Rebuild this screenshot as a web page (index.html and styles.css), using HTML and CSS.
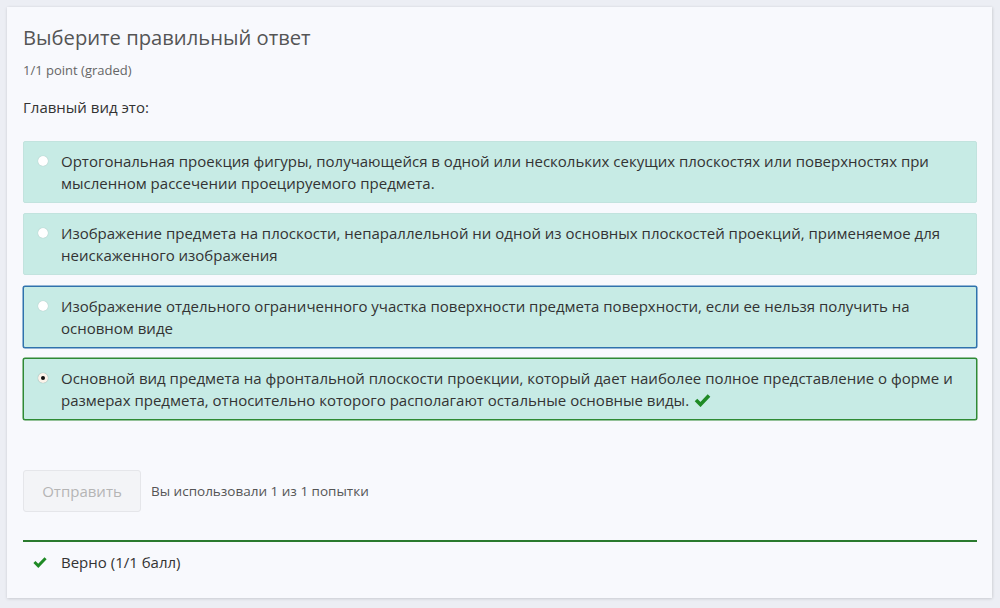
FILE: index.html
```html
<!DOCTYPE html>
<html lang="ru">
<head>
<meta charset="utf-8">
<link rel="stylesheet" href="styles.css">
</head>
<body>
<div class="card">
  <h2 class="title">Выберите правильный ответ</h2>
  <div class="points">1/1 point (graded)</div>
  <p class="question">Главный вид это:</p>
  <div class="options">
    <label class="option">
      <span class="radio"></span>
      <span class="text">Ортогональная проекция фигуры, получающейся в одной или нескольких секущих плоскостях или поверхностях при мысленном рассечении проецируемого предмета.</span>
    </label>
    <label class="option">
      <span class="radio"></span>
      <span class="text">Изображение предмета на плоскости, непараллельной ни одной из основных плоскостей проекций, применяемое для неискаженного изображения</span>
    </label>
    <label class="option focus">
      <span class="radio"></span>
      <span class="text">Изображение отдельного ограниченного участка поверхности предмета поверхности, если ее нельзя получить на основном виде</span>
    </label>
    <label class="option correct">
      <span class="radio checked"></span>
      <span class="text">Основной вид предмета на фронтальной плоскости проекции, который дает наиболее полное представление о форме и размерах предмета, относительно которого располагают остальные основные виды. <svg class="check inline" viewBox="0 0 16 14" width="17" height="14"><path d="M1.5 7 L6 11.5 L14.5 2.5" fill="none" stroke="#1f8a25" stroke-width="3.6"/></svg></span>
    </label>
  </div>
  <div class="actions">
    <button class="submit" disabled>Отправить</button>
    <span class="attempts">Вы использовали 1 из 1 попытки</span>
  </div>
  <div class="feedback">
    <svg class="check" viewBox="0 0 16 14" width="14" height="12"><path d="M1.5 7 L6 11.5 L14.5 2.5" fill="none" stroke="#1f8a25" stroke-width="3.4"/></svg>
    <span>Верно (1/1 балл)</span>
  </div>
</div>
</body>
</html>
```
FILE: styles.css
```css
html, body {
  margin: 0;
  padding: 0;
  background: #eceef4;
}
body {
  padding: 7px 8px 10px 7px;
  font-family: "Open Sans", "Noto Sans", sans-serif;
  color: #333;
}
.card {
  background: #f8f9fd;
  box-shadow: 0 1px 3px rgba(0,0,0,0.12), 1px 0 3px rgba(0,0,0,0.06);
  padding: 16px 15px 23px 16px;
  box-sizing: border-box;
  height: 591px;
}
.title {
  margin: 0;
  font-size: 20.2px;
  font-weight: 400;
  color: #555;
  line-height: 28px;
}
.points {
  margin-top: 10px;
  font-size: 13px;
  color: #666;
  line-height: 18px;
}
.question {
  margin: 17px 0 0;
  font-size: 15px;
  line-height: 22px;
  color: #333;
}
.options {
  margin-top: 23px;
  display: flex;
  flex-direction: column;
  gap: 10.4px;
}
.option {
  display: flex;
  align-items: flex-start;
  background: #c7ebe5;
  border: 1px solid #c2e3de;
  border-radius: 2px;
  padding: 8px 12px 8px 14px;
}
.option.focus {
  border: 1px solid #2f72ad;
  box-shadow: 0 0 0 0.5px #2f72ad;
}
.option.correct {
  border: 1px solid #2e8a34;
  box-shadow: 0 0 0 0.5px #2e8a34;
}
.radio {
  flex: none;
  width: 10px;
  height: 10px;
  border-radius: 50%;
  background: #fff;
  margin-top: 6px;
  margin-right: 13px;
  box-shadow: 0 0 1px rgba(0,0,0,0.25);
  position: relative;
}
.radio.checked {
  background: #fbf3ea;
  box-shadow: 0 0 1px rgba(0,0,0,0.4);
}
.radio.checked::after {
  content: "";
  position: absolute;
  left: 3px;
  top: 3px;
  width: 4px;
  height: 4px;
  border-radius: 50%;
  background: #111;
}
.text {
  font-size: 15px;
  line-height: 22px;
  color: #333;
}
.check.inline {
  vertical-align: -1px;
  margin-left: 1px;
}
.actions {
  margin-top: 50px;
  display: flex;
  align-items: center;
  gap: 10px;
}
.submit {
  font-family: inherit;
  font-size: 15px;
  color: #b5b5b5;
  background: #f3f4f7;
  border: 1px solid #e5e6ea;
  border-radius: 3px;
  width: 118px;
  height: 42px;
  padding: 0;
}
.attempts {
  font-size: 13.5px;
  color: #555;
}
.feedback {
  margin-top: 28px;
  border-top: 2px solid #2a7a2e;
  display: flex;
  align-items: center;
  padding: 10px 0 0 10px;
  gap: 14px;
  font-size: 15px;
  color: #333;
  line-height: 20px;
}
```
